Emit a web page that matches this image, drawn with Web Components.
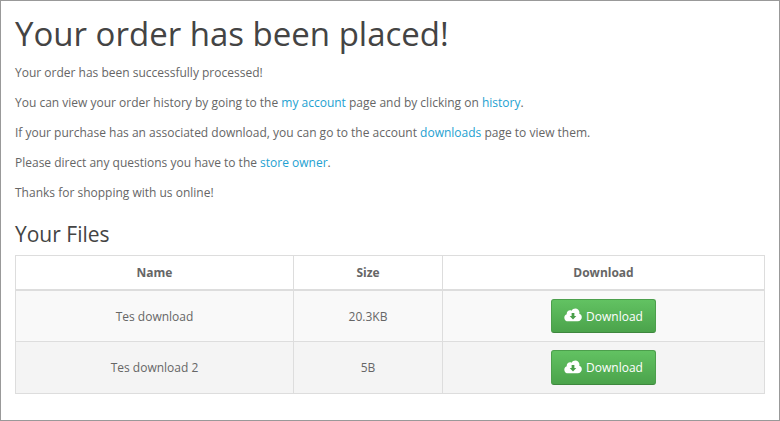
<!DOCTYPE html>
<html><head><meta charset="utf-8"><title>Order</title>
<style>html,body{margin:0;padding:0;background:#fff}body{font-family:"Open Sans",sans-serif}</style></head>
<body>
<order-page>
<h-title>Your order has been placed!</h-title>
<p-line>Your order has been successfully processed!</p-line>
<p-line>You can view your order history by going to the <a-link>my account</a-link> page and by clicking on <a-link>history</a-link>.</p-line>
<p-line>If your purchase has an associated download, you can go to the account <a-link>downloads</a-link> page to view them.</p-line>
<p-line>Please direct any questions you have to the <a-link>store owner</a-link>.</p-line>
<p-line>Thanks for shopping with us online!</p-line>
<h-sub>Your Files</h-sub>
<file-table></file-table>
</order-page>
<script>
function def(name,html){customElements.define(name,class extends HTMLElement{constructor(){super();this.attachShadow({mode:'open'}).innerHTML=html;}});}
def('order-page',`<style>:host{display:block;box-sizing:border-box;width:780px;height:421px;border:1px solid #999;padding:0 14px;font:12px/20px "Open Sans",sans-serif;color:#666;overflow:hidden}</style><slot></slot>`);
def('h-title',`<style>:host{display:block;font-size:33px;line-height:36px;color:#444;margin:15px 0 11px}</style><slot></slot>`);
def('h-sub',`<style>:host{display:block;font-size:21px;line-height:24px;color:#444;margin:19px 0 9px}</style><slot></slot>`);
def('p-line',`<style>:host{display:block;margin:0 0 10px}</style><slot></slot>`);
def('a-link',`<style>:host{display:inline;color:#23a1d1}</style><slot></slot>`);
def('dl-button',`<style>:host{display:inline-flex;align-items:center;justify-content:center;gap:4px;box-sizing:border-box;width:105px;height:34px;padding-top:2px;vertical-align:middle;border:1px solid;border-color:#4c9f4c #4c9f4c #3e873e;border-radius:3px;background:linear-gradient(#62c262,#4ba34b);color:#fff;font-size:12px}:host([tall]){height:35px;padding-top:1px}svg{display:block;margin-top:-3px}</style>
<svg width="18" height="14" viewBox="0 0 17 13"><path fill="#fff" d="M4 12.5C1.8 12.5 0.3 11 0.3 9 0.3 7.4 1.2 6.2 2.6 5.7 2.6 5.5 2.6 5.3 2.6 5.1 2.6 3.4 4 2 5.7 2 6.2 2 6.7 2.1 7.1 2.4 7.9 1.1 9.2 0.3 10.7 0.3 12.9 0.3 14.6 2 14.6 4.1 14.6 4.6 14.5 5 14.4 5.4 15.9 5.9 16.8 7.2 16.8 8.7 16.8 10.8 15.2 12.5 13 12.5Z"/><path fill="#4a9f4a" d="M7.2 4.5H9.8V7.5H11.6L8.5 10.8 5.4 7.5H7.2Z"/></svg><slot></slot>`);
customElements.define('file-table',class extends HTMLElement{constructor(){super();
const rows=[['Tes download','20.3KB',52,'t',''],['Tes download 2','5B',52,'','tall']];
this.attachShadow({mode:'open'}).innerHTML=`<style>:host{display:block}
table{border-collapse:collapse;width:750px;table-layout:fixed;color:#666;font-size:12px}
th,td{border:1px solid #ddd;text-align:center;padding:0;vertical-align:middle;box-sizing:border-box}
th{height:34px;font-weight:700;border-bottom-width:2px;padding-top:2px}
td.t{padding-top:2px}
tbody tr:nth-child(odd){background:#f9f9f9}tbody tr:nth-child(even){background:#f4f4f4}
</style><table><colgroup><col style="width:278px"><col style="width:149px"><col></colgroup><thead><tr><th>Name</th><th>Size</th><th>Download</th></tr></thead><tbody>${rows.map(r=>`<tr style="height:${r[2]}px"><td class="${r[3]}">${r[0]}</td><td class="${r[3]}">${r[1]}</td><td><dl-button ${r[4]}>Download</dl-button></td></tr>`).join('')}</tbody></table>`;}});
</script>
</body></html>
